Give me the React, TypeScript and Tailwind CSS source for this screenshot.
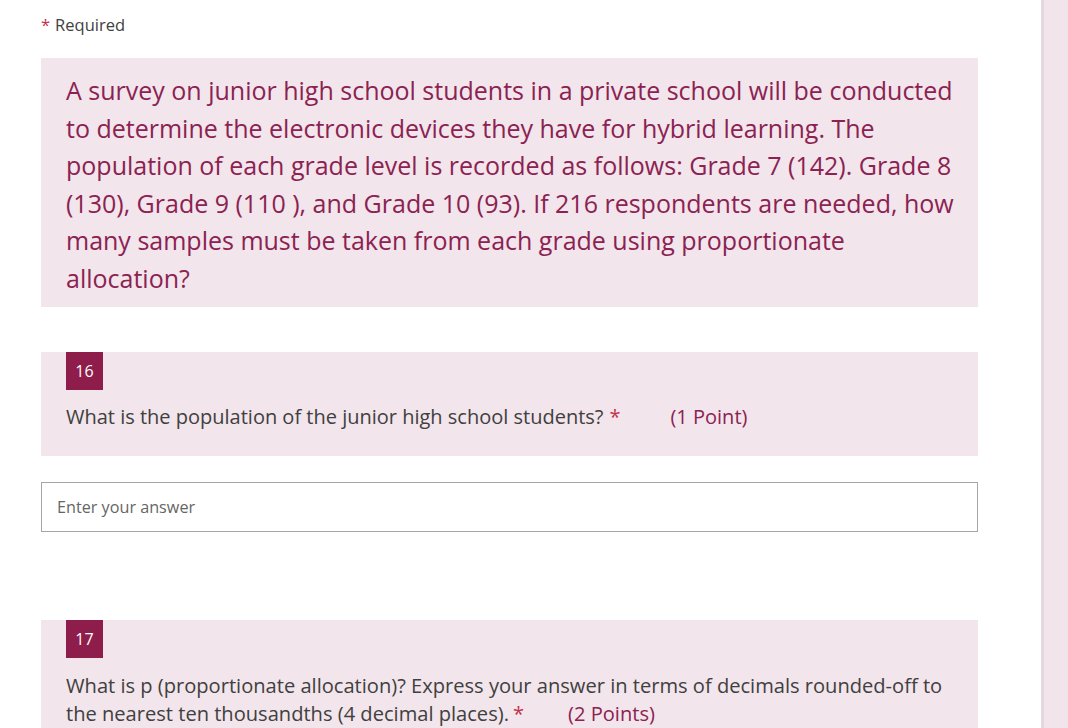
import React from 'react';

const font = { fontFamily: '"Segoe UI", "Open Sans", sans-serif' };

const Badge: React.FC<{ n: number }> = ({ n }) => (
  <div className="w-[37px] h-[38px] bg-[#8f1d4c] text-white text-[16px] flex items-center justify-center">
    {n}
  </div>
);

export default function App() {
  return (
    <div className="w-[1068px] h-[728px] overflow-hidden bg-white flex" style={font}>
      <div className="w-[1041px] pl-[41px] pr-[63px]">
        <div className="h-[58px] flex items-center gap-[5px] pb-[8px]">
          <span className="text-[#c4314b] text-[16.5px]">*</span>
          <span className="text-[#404040] text-[16.5px]">Required</span>
        </div>

        <div className="bg-[#f2e5eb] h-[249px] pl-[25px] pr-[20px] pt-[14px]">
          <p className="text-[#8b2252] text-[25px] leading-[37.5px]">
            A survey on junior high school students in a private school will be conducted
            <br />
            to determine the electronic devices they have for hybrid learning. The
            <br />
            population of each grade level is recorded as follows: Grade 7 (142). Grade 8
            <br />
            (130), Grade 9 (110 ), and Grade 10 (93). If 216 respondents are needed, how
            <br />
            many samples must be taken from each grade using proportionate
            <br />
            allocation?
          </p>
        </div>

        <div className="mt-[45px] bg-[#f2e5eb] h-[104px] pl-[25px]">
          <Badge n={16} />
          <div className="mt-[13px] text-[20px] leading-[28px] text-[#404040] flex">
            <span>What is the population of the junior high school students?</span>
            <span className="text-[#c4314b] ml-[6px]">*</span>
            <span className="text-[#8b2252] ml-[50px]">(1 Point)</span>
          </div>
        </div>

        <div className="mt-[26px] h-[50px] border border-[#a6a6a6] flex items-center pl-[15px]">
          <span className="text-[#666666] text-[16.2px]">Enter your answer</span>
        </div>

        <div className="mt-[88px] bg-[#f2e5eb] h-[140px] pl-[25px]">
          <Badge n={17} />
          <div className="mt-[14px] text-[20.1px] leading-[28px] text-[#404040]">
            What is p (proportionate allocation)? Express your answer in terms of decimals rounded-off to
            <br />
            the nearest ten thousandths (4 decimal places).
            <span className="text-[#c4314b] ml-[4px]">*</span>
            <span className="text-[#8b2252] ml-[44px]">(2 Points)</span>
          </div>
        </div>
      </div>
      <div className="w-[27px] h-full bg-[#f1e4ea] border-l-[3px] border-[#e6d7de]" />
    </div>
  );
}
